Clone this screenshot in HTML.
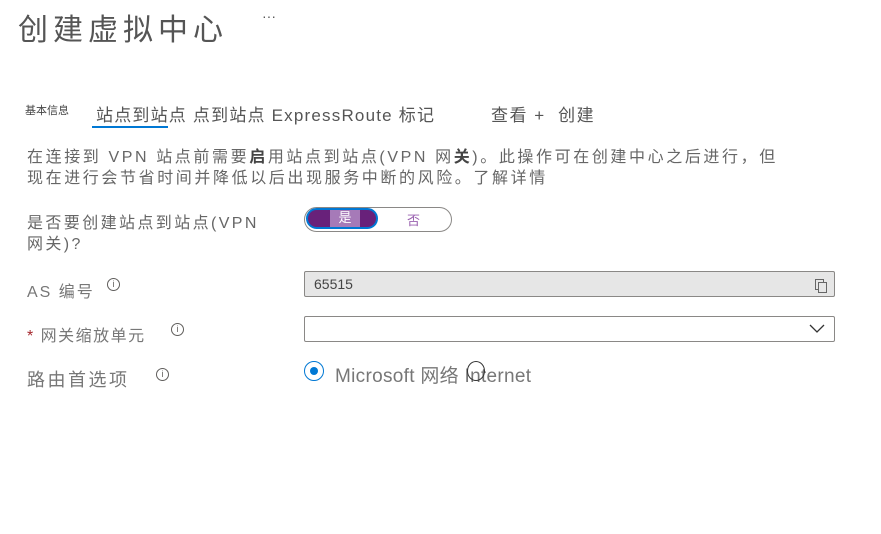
<!DOCTYPE html>
<html><head><meta charset="utf-8"><style>
body{margin:0;width:881px;height:534px;background:#fff;font-family:"Liberation Sans","Noto Sans CJK SC",sans-serif;color:#605e5c;position:relative;overflow:hidden}
.a{position:absolute;white-space:nowrap}
.info{position:absolute;width:11px;height:11px;border:1px solid #605e5c;border-radius:50%;font-size:9px;line-height:11px;text-align:center;color:#605e5c}
</style></head><body>
<div class="a" style="left:18px;top:5px;font-size:30px;color:#555;letter-spacing:5px">创建虚拟中心</div>
<div class="a" style="left:262px;top:8px;font-size:14px;color:#555">···</div>
<div class="a" style="left:25px;top:102px;font-size:11px;color:#444">基本信息</div>
<div class="a" style="left:96px;top:101px;font-size:17px;color:#555;letter-spacing:1.2px">站点到站点 点到站点 ExpressRoute 标记</div>
<div class="a" style="left:92px;top:126px;width:76px;height:2px;background:#0078d4"></div>
<div class="a" style="left:491px;top:101px;font-size:17px;color:#555;letter-spacing:1.5px">查看 + &nbsp;创建</div>
<div class="a" style="left:27px;top:147px;font-size:16px;line-height:21px;color:#666;letter-spacing:2.6px">在连接到 VPN 站点前需要<b style="color:#444">启</b>用站点到站点(VPN 网<b style="color:#444">关</b>)。此操作可在创建中心之后进行，但<br>现在进行会节省时间并降低以后出现服务中断的风险。了解详情</div>
<div class="a" style="left:27px;top:213px;font-size:16px;line-height:21px;color:#666;letter-spacing:2.4px">是否要创建站点到站点(VPN<br>网关)?</div>
<div class="a" style="left:304px;top:207px;width:146px;height:23px;border:1px solid #8a8886;border-radius:13px"></div>
<div class="a" style="left:306px;top:208px;width:68px;height:17px;border:2px solid #0078d4;border-radius:11px;background:#68217a;overflow:hidden"><div style="position:absolute;left:22px;top:0;width:30px;height:17px;background:#a67ab8"></div><div style="position:absolute;left:22px;top:0;width:30px;text-align:center;font-size:13px;color:#fff;line-height:16px">是</div></div>
<div class="a" style="left:407px;top:210px;font-size:13px;color:#9a62b0">否</div>
<div class="a" style="left:27px;top:278px;font-size:16px;color:#777;letter-spacing:2px">AS 编号</div>
<div class="info" style="left:107px;top:278px">i</div>
<div class="a" style="left:304px;top:271px;width:529px;height:24px;background:#e6e6e6;border:1px solid #8a8886;border-radius:2px"></div>
<div class="a" style="left:314px;top:276px;font-size:14px;color:#444">65515</div>
<div class="a" style="left:815px;top:279px;width:7px;height:9px;border:1px solid #666;background:#e6e6e6"></div>
<div class="a" style="left:818px;top:282px;width:7px;height:9px;border:1px solid #666;background:#e6e6e6"></div>
<div class="a" style="left:27px;top:322px;font-size:16px;color:#777;letter-spacing:1.5px"><span style="color:#a4262c">*</span> 网关缩放单元</div>
<div class="info" style="left:171px;top:323px">i</div>
<div class="a" style="left:304px;top:316px;width:529px;height:24px;border:1px solid #8a8886;border-radius:2px"></div>
<svg class="a" style="left:808px;top:322px" width="18" height="12"><path d="M2 3 L9 10 L16 3" fill="none" stroke="#333" stroke-width="1.3"/></svg>
<div class="a" style="left:27px;top:366px;font-size:18px;color:#777;letter-spacing:2.5px">路由首选项</div>
<div class="info" style="left:156px;top:368px">i</div>
<div class="a" style="left:304px;top:361px;width:18px;height:18px;border:1px solid #0078d4;border-radius:50%"></div>
<div class="a" style="left:310px;top:367px;width:8px;height:8px;background:#0078d4;border-radius:50%"></div>
<div class="a" style="left:335px;top:361px;font-size:19px;color:#777;letter-spacing:0.3px">Microsoft 网络 Internet</div>
<div class="a" style="left:467px;top:361px;width:16px;height:18px;border:1.5px solid #333;border-radius:50%"></div>
</body></html>
